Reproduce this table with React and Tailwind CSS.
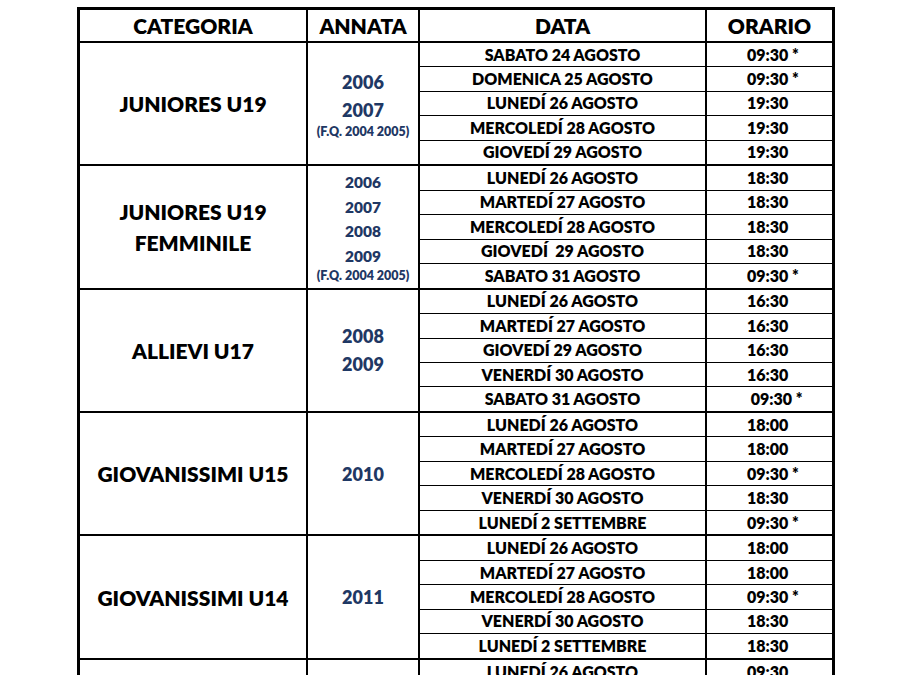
import React from 'react';

const groups = [
    {
        cat: ['JUNIORES U19'],
        years: ['2006', '2007'],
        fq: true,
        big: true,
        rows: [
            ['SABATO 24 AGOSTO', '09:30 *'],
            ['DOMENICA 25 AGOSTO', '09:30 *'],
            ['LUNEDÍ 26 AGOSTO', '19:30'],
            ['MERCOLEDÍ 28 AGOSTO', '19:30'],
            ['GIOVEDÍ 29 AGOSTO', '19:30'],
        ],
    },
    {
        cat: ['JUNIORES U19', 'FEMMINILE'],
        years: ['2006', '2007', '2008', '2009'],
        fq: true,
        big: false,
        rows: [
            ['LUNEDÍ 26 AGOSTO', '18:30'],
            ['MARTEDÍ 27 AGOSTO', '18:30'],
            ['MERCOLEDÍ 28 AGOSTO', '18:30'],
            ['GIOVEDÍ  29 AGOSTO', '18:30'],
            ['SABATO 31 AGOSTO', '09:30 *'],
        ],
    },
    {
        cat: ['ALLIEVI U17'],
        years: ['2008', '2009'],
        big: true,
        rows: [
            ['LUNEDÍ 26 AGOSTO', '16:30'],
            ['MARTEDÍ 27 AGOSTO', '16:30'],
            ['GIOVEDÍ 29 AGOSTO', '16:30'],
            ['VENERDÍ 30 AGOSTO', '16:30'],
            ['SABATO 31 AGOSTO', ' 09:30 *'],
        ],
    },
    {
        cat: ['GIOVANISSIMI U15'],
        years: ['2010'],
        big: true,
        rows: [
            ['LUNEDÍ 26 AGOSTO', '18:00'],
            ['MARTEDÍ 27 AGOSTO', '18:00'],
            ['MERCOLEDÍ 28 AGOSTO', '09:30 *'],
            ['VENERDÍ 30 AGOSTO', '18:30'],
            ['LUNEDÍ 2 SETTEMBRE', '09:30 *'],
        ],
    },
    {
        cat: ['GIOVANISSIMI U14'],
        years: ['2011'],
        big: true,
        rows: [
            ['LUNEDÍ 26 AGOSTO', '18:00'],
            ['MARTEDÍ 27 AGOSTO', '18:00'],
            ['MERCOLEDÍ 28 AGOSTO', '09:30 *'],
            ['VENERDÍ 30 AGOSTO', '18:30'],
            ['LUNEDÍ 2 SETTEMBRE', '18:30'],
        ],
    },
    {
        cat: [],
        years: [],
        big: true,
        rows: [['LUNEDÍ 26 AGOSTO', '09:30']],
    },
];

const Group = ({ g }) => (
    <div className="flex border-b-2 border-black">
        <div className="w-[228px] border-r-2 border-black flex flex-col items-center justify-center text-[21px] leading-[31px] font-extrabold">
            {g.cat.map(c => <div key={c}>{c}</div>)}
        </div>
        <div className="w-[112px] border-r-2 border-black flex flex-col items-center justify-center text-[#1f3864] font-extrabold">
            {g.years.map(y => (
                <div key={y} className={g.big ? 'text-[18px] leading-[28px]' : 'text-[15.5px] leading-[24.5px]'}>{y}</div>
            ))}
            {g.fq && <div className="text-[12.5px] leading-[16px]">(F.Q. 2004 2005)</div>}
        </div>
        <div className="flex-1 flex flex-col">
            {g.rows.map(([d, t], i) => {
                const last = i === g.rows.length - 1;
                return (
                    <div key={i} className={last ? 'flex h-[23.8px]' : 'flex h-[24.4px] border-b border-black'}>
                        <div className="w-[287px] border-r-2 border-black flex items-center justify-center text-[16px] font-extrabold whitespace-pre">{d}</div>
                        <div className="flex-1 flex items-center pl-[40px] text-[16px] font-extrabold whitespace-pre">{t}</div>
                    </div>
                );
            })}
        </div>
    </div>
);

const App = () => {
    return (
        <div className="min-h-screen bg-white pt-[7px] pl-[77px] font-['Lato',sans-serif] text-black">
            <div className="w-[758px] border-[3px] border-b-0 border-black">
                <div className="flex h-[33px] border-b-2 border-black text-[21px] font-extrabold">
                    <div className="w-[228px] border-r-2 border-black flex items-center justify-center">CATEGORIA</div>
                    <div className="w-[112px] border-r-2 border-black flex items-center justify-center">ANNATA</div>
                    <div className="w-[287px] border-r-2 border-black flex items-center justify-center">DATA</div>
                    <div className="flex-1 flex items-center justify-center">ORARIO</div>
                </div>
                {groups.map((g, i) => <Group key={i} g={g} />)}
            </div>
        </div>
    );
};

export default App;
